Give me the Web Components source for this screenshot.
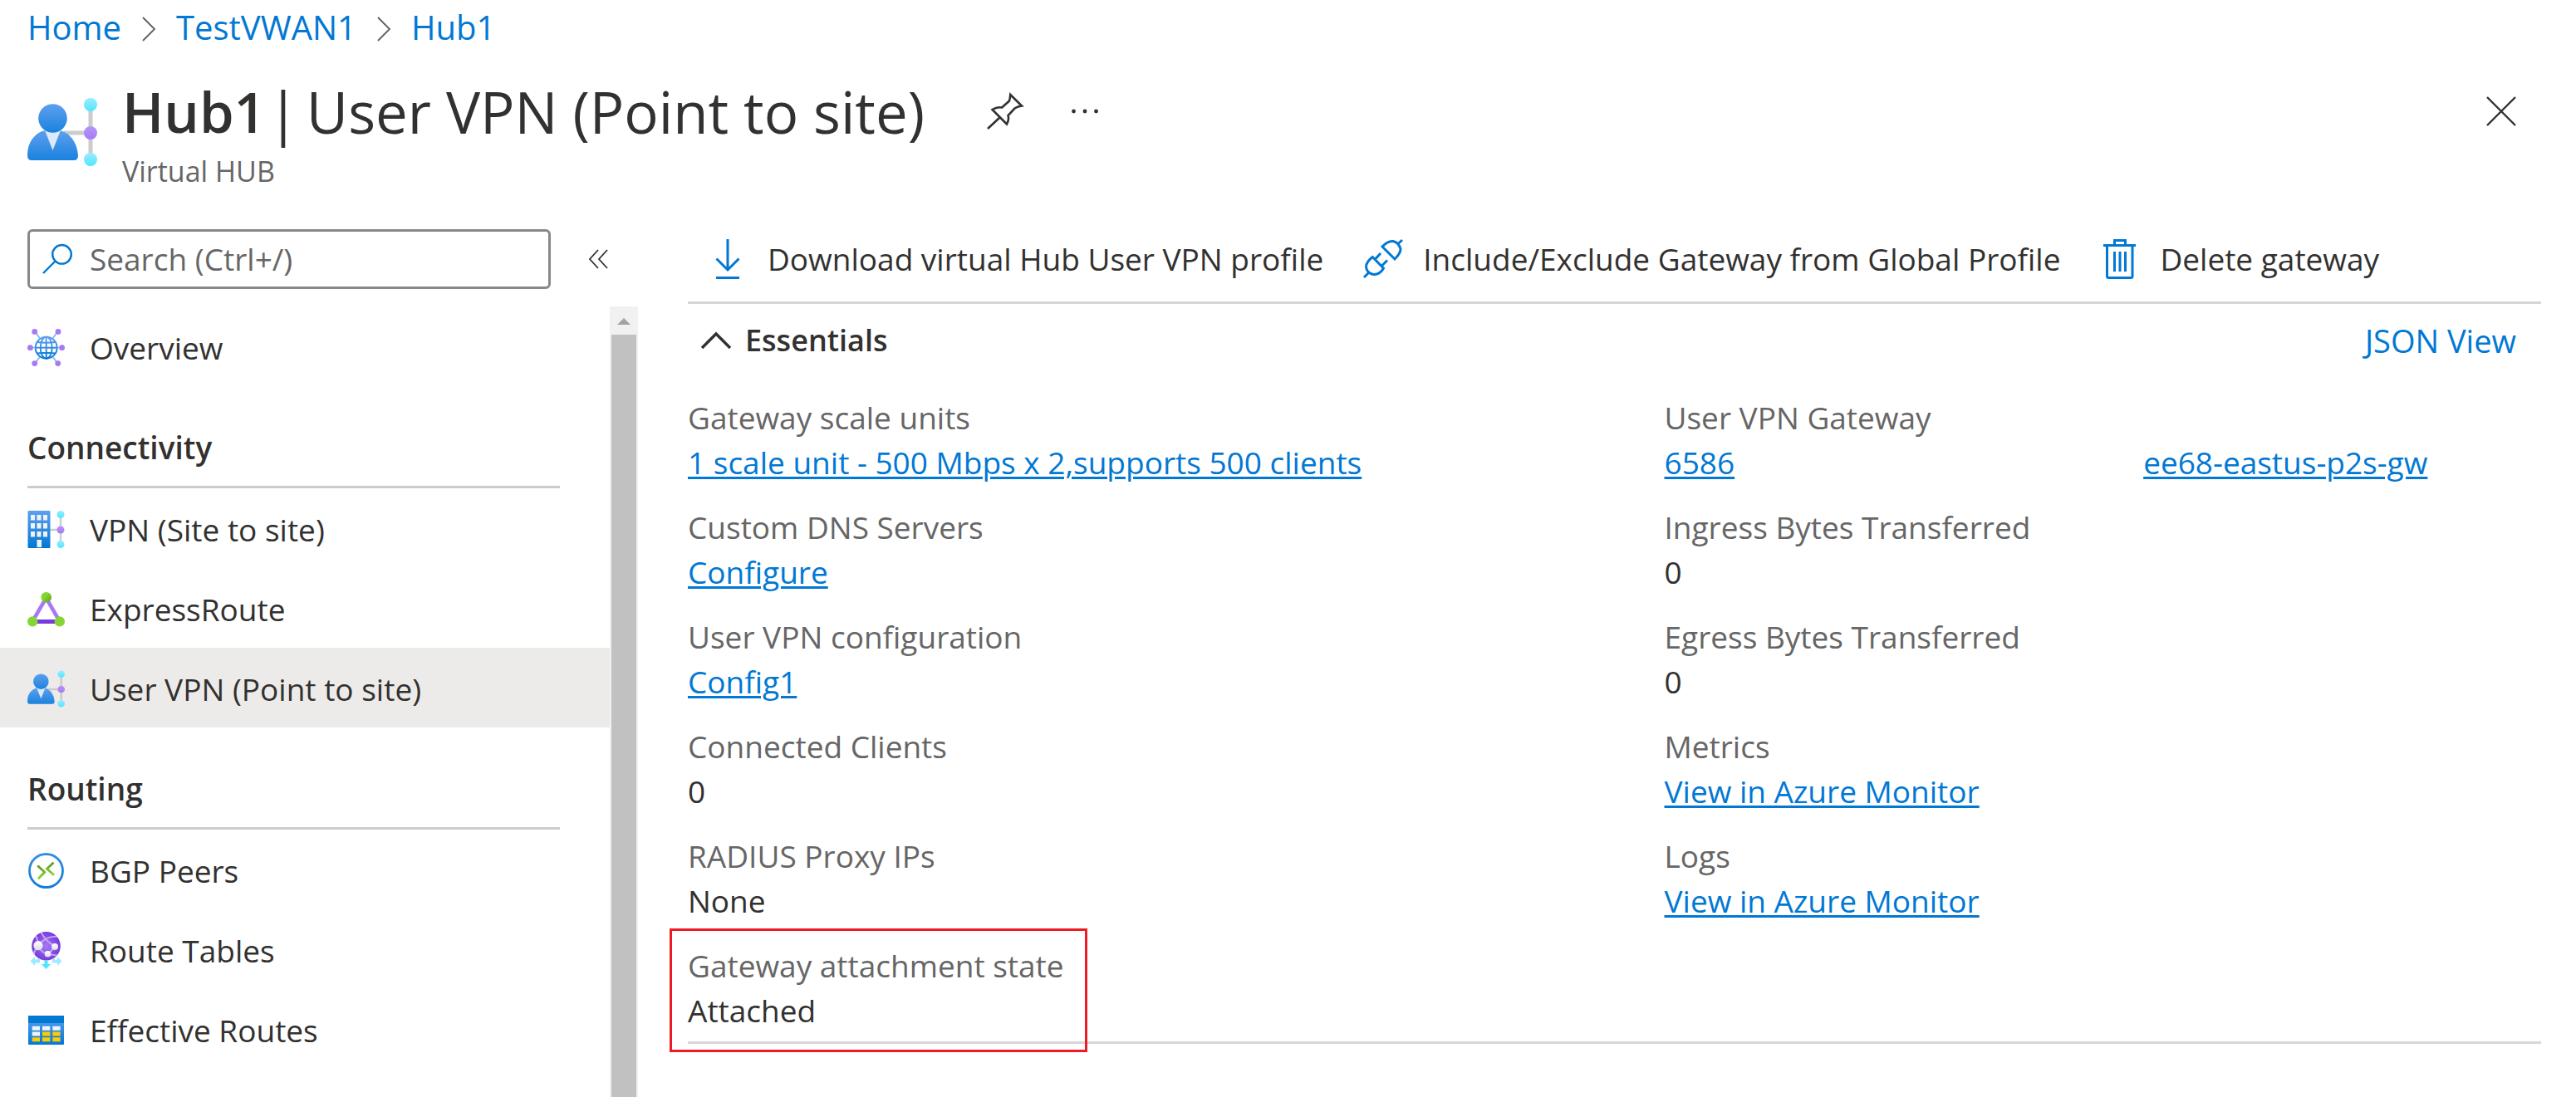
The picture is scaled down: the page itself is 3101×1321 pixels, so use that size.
<!DOCTYPE html>
<html lang="en">
<head>
<meta charset="utf-8">
<title>Hub1 | User VPN (Point to site)</title>
<style>
  body {
    margin: 0;
    background: #fff;
    color: #323130;
    font-family: "Open Sans", "Noto Sans", sans-serif;
    font-size: 37px;
    line-height: 54px;
    --link: #0078d4;
    --muted: #666;
    --rule: #d6d6d6;
  }
</style>
</head>
<body>
<portal-blade>
  <portal-breadcrumb slot="breadcrumb">
    <crumb-link href="#home">Home</crumb-link>
    <crumb-link href="#vwan">TestVWAN1</crumb-link>
    <crumb-link href="#hub" last>Hub1</crumb-link>
  </portal-breadcrumb>
  <blade-header slot="header">
    <span slot="name">Hub1</span>
    <span slot="section">User VPN (Point to site)</span>
    <span slot="kind">Virtual HUB</span>
  </blade-header>
  <side-menu slot="menu">
    <menu-item icon="hub">Overview</menu-item>
    <menu-heading>Connectivity</menu-heading>
    <menu-item icon="site">VPN (Site to site)</menu-item>
    <menu-item icon="express">ExpressRoute</menu-item>
    <menu-item icon="user" selected>User VPN (Point to site)</menu-item>
    <menu-heading>Routing</menu-heading>
    <menu-item icon="bgp">BGP Peers</menu-item>
    <menu-item icon="routes">Route Tables</menu-item>
    <menu-item icon="table">Effective Routes</menu-item>
  </side-menu>
  <command-bar>
    <command-button icon="download">Download virtual Hub User VPN profile</command-button>
    <command-button icon="plug">Include/Exclude Gateway from Global Profile</command-button>
    <command-button icon="trash">Delete gateway</command-button>
  </command-bar>
  <essentials-panel>
    <essentials-item label="Gateway scale units" link>1 scale unit - 500 Mbps x 2,supports 500 clients</essentials-item>
    <essentials-item label="User VPN Gateway" link>6586<span slot="tail">ee68-eastus-p2s-gw</span></essentials-item>
    <essentials-item label="Custom DNS Servers" link>Configure</essentials-item>
    <essentials-item label="Ingress Bytes Transferred">0</essentials-item>
    <essentials-item label="User VPN configuration" link>Config1</essentials-item>
    <essentials-item label="Egress Bytes Transferred">0</essentials-item>
    <essentials-item label="Connected Clients">0</essentials-item>
    <essentials-item label="Metrics" link>View in Azure Monitor</essentials-item>
    <essentials-item label="RADIUS Proxy IPs">None</essentials-item>
    <essentials-item label="Logs" link>View in Azure Monitor</essentials-item>
    <essentials-item label="Gateway attachment state" highlight>Attached</essentials-item>
  </essentials-panel>
</portal-blade>

<script>
const grad = (id, a, b) => `<linearGradient id="${id}" x1="0" y1="0" x2="0" y2="1"><stop offset="0" stop-color="${a}"/><stop offset="1" stop-color="${b}"/></linearGradient>`;
const BLUE = grad('b', '#5ea0ef', '#0078d4');
const HEADB = grad('b', '#5ea0ef', '#1a82dd');
const CYAN = grad('c', '#9cebff', '#50e6ff');
const VIOLET = grad('v', '#b796f9', '#a67af4');
const ICONS = {
  user: ['0 0 84 82', `<defs>${HEADB}${CYAN}${VIOLET}</defs>
    <path d="M44 42H76M76 8V74" stroke="#ccc" stroke-width="5" fill="none"/>
    <circle cx="76" cy="8" r="8" fill="url(#c)"/><circle cx="76" cy="42" r="8" fill="url(#v)"/><circle cx="76" cy="74" r="8" fill="url(#c)"/>
    <path d="M5 75Q0 75 0 69Q0 57 6 49Q13 40 22 39H39Q48 41 54 49Q60 57 61 69Q61 75 56 75Z" fill="url(#b)"/>
    <path d="M21 39H40L30.500 63Z" fill="#dceafa"/>
    <circle cx="30.500" cy="24.500" r="17.300" fill="url(#b)"/>`],
  hub: ['0 0 45 45', `<defs>${BLUE}</defs>
    <path d="M9 3L36.500 42M36.500 3L9 42M3 22.700H42" stroke="#83b9f9" stroke-width="1.800"/>
    <circle cx="22.700" cy="22.700" r="14" fill="#fff"/>
    <g fill="none" stroke="url(#b)" stroke-width="1.900"><circle cx="22.700" cy="22.700" r="13"/><ellipse cx="22.700" cy="22.700" rx="7" ry="13"/><path d="M22.600 9.700L22.800 35.700M9.700 22.600L35.700 22.800M12 16Q22.700 17.500 33.500 16M12 29.500Q22.700 28 33.500 29.500"/></g>
    <g fill="#a67af4"><circle cx="8.700" cy="3.400" r="3.400"/><circle cx="37" cy="3.400" r="3.400"/><circle cx="3.400" cy="22.700" r="3.400"/><circle cx="41.600" cy="22.700" r="3.400"/><circle cx="8.700" cy="41.600" r="3.400"/><circle cx="36.700" cy="41.600" r="3.400"/></g>`],
  site: ['0 0 45 45', `<defs>${BLUE}${CYAN}${VIOLET}</defs>
    <path d="M27 23H40M40 4V41" stroke="#ccc" stroke-width="2.400" fill="none"/>
    <rect x=".5" width="27" height="45" rx="1" fill="url(#b)"/>
    <g fill="#f2f2f2"><path d="M4 5h5v6.500h-5zM11.500 5h5v6.500h-5zM19 5h5v6.500h-5zM4 15h5v6.500h-5zM11.500 15h5v6.500h-5zM19 15h5v6.500h-5zM4 25h5v6.500h-5zM11.500 25h5v6.500h-5zM19 25h5v6.500h-5zM11.500 35h5.500v9h-5.500z"/></g>
    <circle cx="40" cy="4.500" r="4.500" fill="url(#c)"/><circle cx="40" cy="23" r="4.500" fill="url(#v)"/><circle cx="40" cy="40.500" r="4.500" fill="url(#c)"/>`],
  express: ['0 -2 45 45', `<defs><linearGradient id="g" x1="0" y1="0" x2="1" y2="1"><stop offset=".4" stop-color="#86d633"/><stop offset="1" stop-color="#5e9624"/></linearGradient></defs>
    <path d="M6 35.500L22.500 7L39 35.500" fill="none" stroke="#a67af4" stroke-width="4.500"/><path d="M6 35.500H39" stroke="#773adc" stroke-width="4.800"/>
    <circle cx="22.700" cy="6.300" r="6.300" fill="url(#g)"/><circle cx="6.200" cy="35.400" r="6.200" fill="#86d633"/><circle cx="38.800" cy="35.400" r="6.200" fill="#86d633"/>`],
  bgp: ['0 0 45 45', `<defs>${grad('b', '#338fe5', '#0f7cd8')}${grad('g', '#5e9624', '#86d633')}</defs>
    <circle cx="22.500" cy="22.500" r="20" fill="#fff" stroke="url(#b)" stroke-width="2.800"/>
    <path d="M12.300 16.500L20.700 24.200L13 32.200" fill="none" stroke="url(#g)" stroke-width="2.800"/><path d="M31.500 12.800L23.500 20.200L32 27.800" fill="none" stroke="url(#g)" stroke-width="2.800"/>`],
  routes: ['0 0 45 45', `<defs><radialGradient id="p"><stop offset="0" stop-color="#a67af4"/><stop offset="1" stop-color="#773adc"/></radialGradient>${grad('w', '#fff', '#ddd')}<clipPath id="k"><circle cx="22.500" cy="17.300" r="17.300"/></clipPath></defs>
    <circle cx="22.500" cy="17.300" r="17.300" fill="url(#p)"/>
    <g clip-path="url(#k)" fill="none" stroke="#c3a5f7" stroke-width="2"><path d="M13 16Q24 4 37 6M16 0Q22 12 34 18M13 17Q16 25 25 27L38 29M9 4Q14 10 12 20Q6 24 9 31M33 18L25 27"/></g>
    <circle cx="13" cy="16.700" r="5.600" fill="url(#w)"/><circle cx="33" cy="18" r="4" fill="url(#w)"/><circle cx="24.500" cy="26.700" r="3.800" fill="url(#w)"/>
    <path d="M3.500 35.500L9 30V33.500H12.500V32H15V37.500H9V41ZM41.500 35.500L36 30V33.500H32.500V32H30V37.500H36V41Z" fill="#9cebff"/><path d="M22.500 45L17 39H20.500V34.500H24.500V39H28Z" fill="#50e6ff"/>`],
  table: ['0 0 45 45', `<defs>${BLUE}</defs><rect x="1" y="5" width="43" height="35" rx="1" fill="url(#b)"/><path d="M1 5h43v9h-43z" fill="#0078d4"/>
    <path d="M5.700 17.700h9.300v5h-9.300zM18 17.700h9.300v5h-9.300zM30.300 17.700h9.300v5h-9.300zM5.700 24.500h9.300v5h-9.300z" fill="#f0f5fd"/>
    <path d="M18 24.500h9.300v5h-9.300zM30.300 24.500h9.300v5h-9.300zM5.700 31.200h9.300v5h-9.300zM18 31.200h9.300v5h-9.300zM30.300 31.200h9.300v5h-9.300z" fill="#ffca00"/>`],
  search: ['0 0 36 36', `<g fill="none" stroke="#0078d4" stroke-width="2.400"><circle cx="23.500" cy="12.300" r="11.300"/><path d="M15.500 20.500L1 35"/></g>`],
  collapse: ['0 0 24 24', `<path d="M12 1L2 12L12 23M23 1L13 12L23 23" fill="none" stroke="#323130" stroke-width="1.800"/>`],
  chevron: ['0 0 18 32', `<path d="M2 2L16 16L2 30" fill="none" stroke="#605e5c" stroke-width="1.800"/>`],
  up: ['0 0 38 22', `<path d="M2 20L19 3L36 20" fill="none" stroke="#323130" stroke-width="3.400"/>`],
  close: ['0 0 36 36', `<path d="M1 1L35 35M35 1L1 35" fill="none" stroke="#323130" stroke-width="2.400"/>`],
  pin: ['0 0 42 42', `<path d="M0 42L15 28M27.300 1L41 14.500Q36 15 32.500 17.500L24.500 26Q26 31 23 36.500L5.500 19Q11 15.500 17 16.500L26 8.500Q27 5 27.300 1Z" fill="none" stroke="#323130" stroke-width="2.600"/>`],
  more: ['0 0 36 36', `<g fill="#323130"><circle cx="4.500" cy="18" r="2.400"/><circle cx="18" cy="18" r="2.400"/><circle cx="31.500" cy="18" r="2.400"/></g>`],
  download: ['0 0 48 48', `<path d="M24 0V37M10.500 23.500L24 37L37.500 23.500M10 46.500H38" fill="none" stroke="#0078d4" stroke-width="3"/>`],
  plug: ['0 0 48 48', `<path d="M1 46L7 40M11.300 21.500L24.500 35Q20 43 12.500 42.500Q4 41 3.500 33Q4 27 11.300 21.500ZM14.500 24L21 17M22.500 32L29 25.500M23 9L38 24Q45 17 45 12Q43 4 36 2.500Q30 1.500 23 9ZM41.500 6L47 1" fill="none" stroke="#0078d4" stroke-width="3"/>`],
  trash: ['0 0 48 48', `<path d="M4 7.500H43M17.500 7V1.500H30.500V7M8.500 8V44.500Q8.500 46.500 10.500 46.500H37Q39 46.500 39 44.500V8M17.500 15V39M24 15V39M30.500 15V39" fill="none" stroke="#0078d4" stroke-width="3"/>`],
};

const define = (name, html, setup) => {
  const tpl = document.createElement('template');
  tpl.innerHTML = html;
  customElements.define(name, class extends HTMLElement {
    constructor() {
      super();
      this.attachShadow({ mode: 'open' }).append(tpl.content.cloneNode(true));
    }
    connectedCallback() {
      if (setup && !this.ready) setup(this, this.shadowRoot);
      this.ready = true;
    }
  });
};

// Puts the icon named by the host's icon attribute before the label.
const addIcon = selector => (el, root) => {
  const icon = document.createElement('portal-icon');
  icon.setAttribute('name', el.getAttribute('icon'));
  root.querySelector(selector).prepend(icon);
};

define('portal-icon', `<style>:host{display:block;flex:none;width:45px;height:45px}svg{display:block;width:100%;height:100%;overflow:visible}</style>`, (el, root) => {
  const [box, body] = ICONS[el.getAttribute('name')];
  root.innerHTML += `<svg viewBox="${box}" aria-hidden="true">${body}</svg>`;
});

define('portal-blade', `<style>
  :host{display:flex;flex-direction:column;min-height:100vh}
  .body{display:flex;flex:1}
  main{flex:1;min-width:0;margin:0 42px 0 60px}
</style><slot name="breadcrumb"></slot><slot name="header"></slot>
<div class="body"><slot name="menu"></slot><main><slot></slot></main></div>`);

define('portal-breadcrumb', `<style>:host{display:block}nav{display:flex;padding:6px 33px 0;font-size:40px}</style>
<nav aria-label="Breadcrumb"><slot></slot></nav>`);

define('crumb-link', `<style>
  :host{display:flex;align-items:center}
  :host([last]) portal-icon{display:none}
  a{color:var(--link);text-decoration:none}
  portal-icon{width:18px;height:32px;margin:4px 24px 0}
</style><a><slot></slot></a><portal-icon name="chevron"></portal-icon>`, (el, root) => {
  root.querySelector('a').href = el.getAttribute('href');
});

define('blade-header', `<style>
  :host{display:block}
  header{display:flex;padding:26px 72px 30px 33px}
  .logo{width:84px;height:82px;margin:32px 30px 0 0}
  .text{flex:1}
  .row{display:flex;align-items:center}
  h1{display:flex;margin:0;font-size:69px;line-height:96px;font-weight:400}
  h1 b{font-size:67px;font-weight:600}
  .bar{margin:0 9px 0 2px}
  p{margin:0;font-size:34px;line-height:48px;color:var(--muted)}
  button{border:0;padding:0;background:none}
  .pin{margin-left:76px}.pin portal-icon{width:42px;height:42px}
  .more{margin-left:57px}.more portal-icon{width:36px;height:36px}
  .close{margin-left:auto}.close portal-icon{width:36px;height:36px}
</style><header><portal-icon class="logo" name="user"></portal-icon>
<div class="text"><div class="row">
<h1><b><slot name="name"></slot></b><span class="bar">|</span><slot name="section"></slot></h1>
<button class="pin" aria-label="Pin"><portal-icon name="pin"></portal-icon></button>
<button class="more" aria-label="More"><portal-icon name="more"></portal-icon></button>
<button class="close" aria-label="Close"><portal-icon name="close"></portal-icon></button>
</div><p><slot name="kind"></slot></p></div></header>`);

define('side-menu', `<style>
  :host{display:flex;flex-direction:column;width:768px}
  .find{display:flex;align-items:center;padding:16px 36px 21px 33px}
  label{display:flex;align-items:center;box-sizing:border-box;flex:1;height:72px;border:3px solid #8a8886;border-radius:6px;padding:0 15px}
  label portal-icon{width:36px;height:36px}
  input{flex:1;min-width:0;margin-left:21px;padding:0;border:0;outline:0;background:none;font:inherit;color:inherit}
  input::placeholder{color:var(--muted);opacity:1}
  button{border:0;padding:0;margin-left:45px;background:none}
  button portal-icon{width:24px;height:24px}
  .scroll{display:flex;flex:1}
  nav{flex:1}
  .bar{display:flex;flex-direction:column;align-items:center;width:34px;background:#f1f1f1}
  .arrow{margin:14px 0 12px;border:8px solid transparent;border-top:0;border-bottom:8px solid #a3a3a3}
  .thumb{flex:1;width:30px;background:#c1c1c1}
</style><div class="find"><label><portal-icon name="search"></portal-icon><input type="text" placeholder="Search (Ctrl+/)" aria-label="Search (Ctrl+/)"></label>
<button aria-label="Collapse menu"><portal-icon name="collapse"></portal-icon></button></div>
<div class="scroll"><nav><slot></slot></nav><div class="bar" aria-hidden="true"><div class="arrow"></div><div class="thumb"></div></div></div>`);

define('menu-heading', `<style>
  :host{display:block}
  h2{margin:0 60px 0 33px;padding:47px 0 19px;border-bottom:3px solid #ccc;font-size:inherit;font-weight:600}
</style><h2><slot></slot></h2>`);

define('menu-item', `<style>
  :host{display:block}
  a{display:flex;align-items:center;gap:30px;box-sizing:border-box;height:96px;padding:3px 33px 0;color:inherit;text-decoration:none}
  :host([selected]) a{background:#edebe9}
</style><a href="#"><span><slot></slot></span></a>`, addIcon('a'));

define('command-bar', `<style>:host{display:flex;align-items:center;gap:48px;height:103px;padding-left:24px;border-bottom:3px solid var(--rule)}</style><slot></slot>`);

define('command-button', `<style>
  :host{display:block}
  button{display:flex;align-items:center;gap:24px;border:0;padding:0;background:none;font:inherit;color:inherit;white-space:nowrap}
  portal-icon{width:48px;height:48px}
</style><button><span><slot></slot></span></button>`, addIcon('button'));

define('essentials-panel', `<style>
  :host{display:block;border-bottom:3px solid var(--rule)}
  .head{display:flex;align-items:center;justify-content:space-between;padding:17px 30px 39px 15px}
  button{display:flex;align-items:center;gap:16px;border:0;padding:0;background:none;font:inherit;font-size:36px;font-weight:600;color:inherit}
  portal-icon{width:38px;height:22px}
  a{color:var(--link);text-decoration:none;font-size:38px}
  .grid{display:grid;grid-template-columns:1fr 1fr;gap:24px 120px;padding-bottom:10px}
</style><div class="head"><button aria-expanded="true"><portal-icon name="up"></portal-icon>Essentials</button><a href="#json">JSON View</a></div>
<div class="grid"><slot></slot></div>`);

define('essentials-item', `<style>
  :host{display:block;position:relative;justify-self:start;white-space:nowrap}
  :host([highlight])::after{content:"";position:absolute;inset:-18px -28px -23px -22px;border:3px solid #ed1c24}
  .label{color:var(--muted)}
  a{color:var(--link);text-decoration:underline;text-decoration-thickness:3px;text-underline-offset:3px}
  .gap{display:inline-block;width:492px}
</style><div class="label"></div><div class="value"><slot></slot></div>`, (el, root) => {
  root.querySelector('.label').textContent = el.getAttribute('label');
  if (el.hasAttribute('link')) {
    const tail = el.querySelector('[slot=tail]') ? '<span class="gap"></span><a href="#"><slot name="tail"></slot></a>' : '';
    root.querySelector('.value').innerHTML = `<a href="#"><slot></slot></a>${tail}`;
  }
});
</script>
</body>
</html>
